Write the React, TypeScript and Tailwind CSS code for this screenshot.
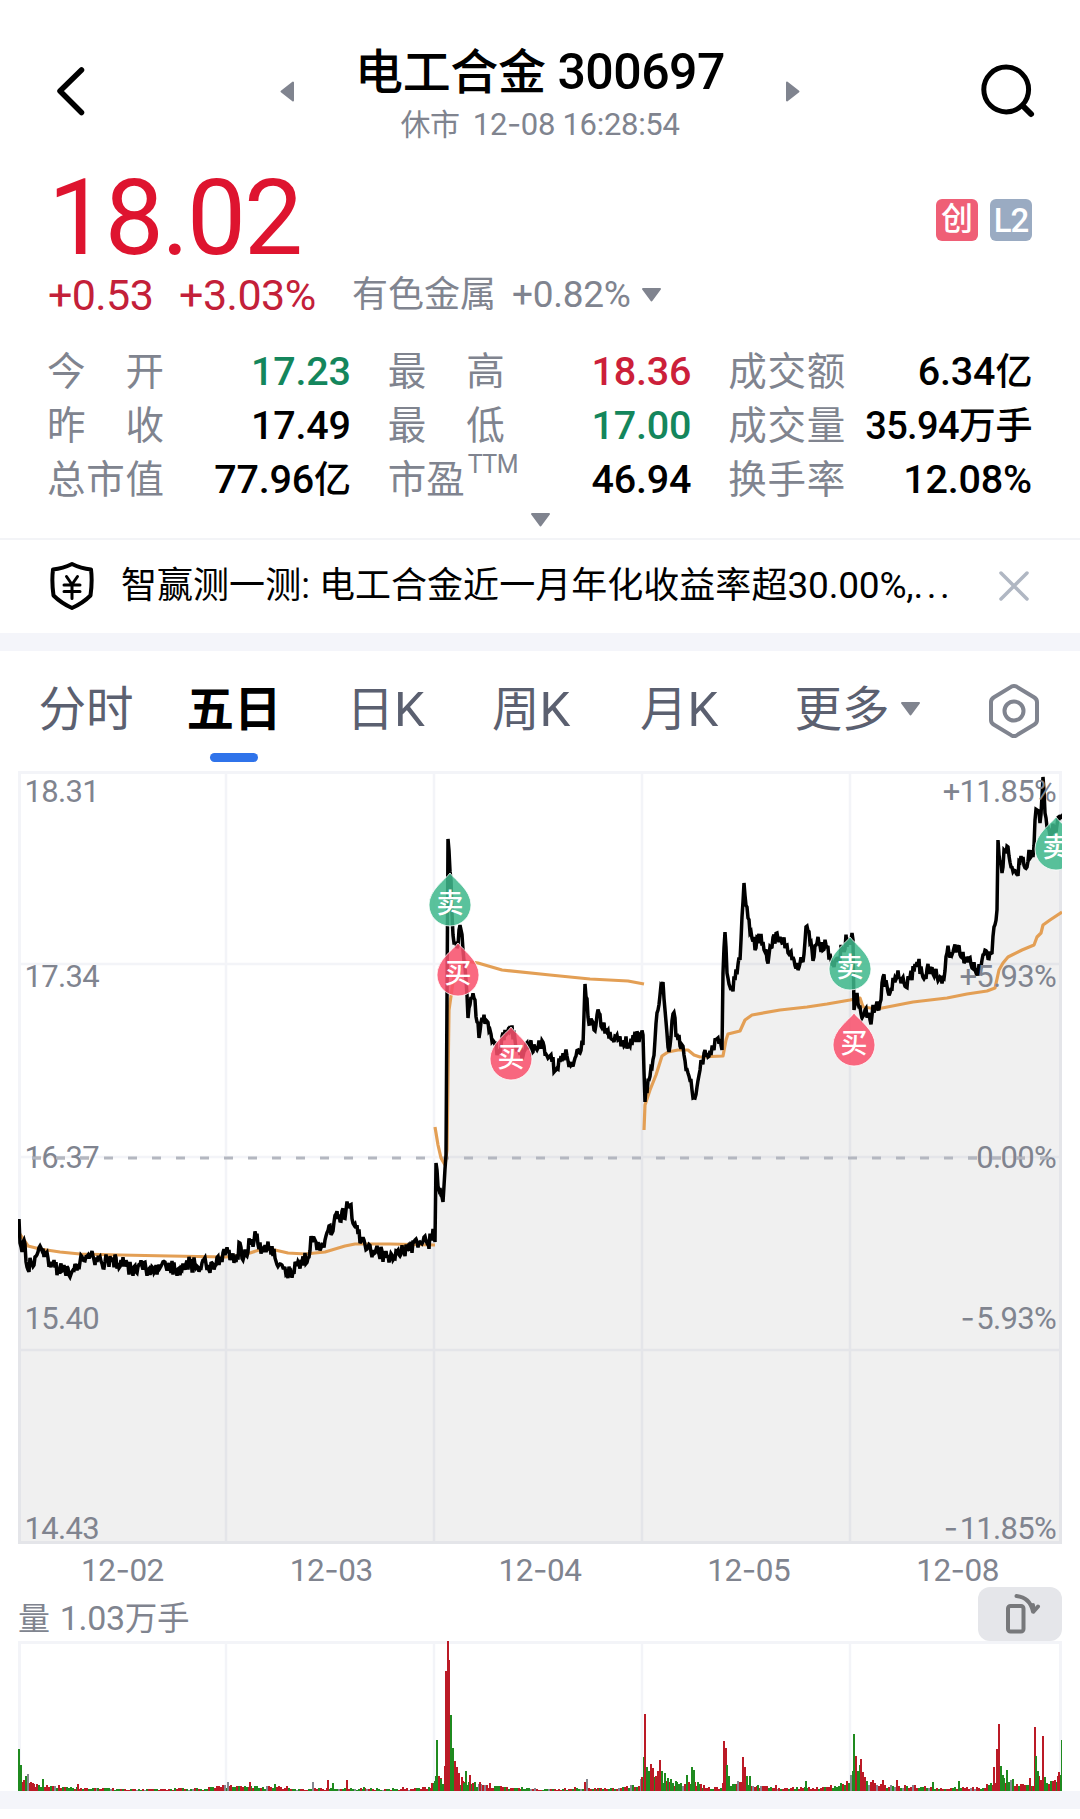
import React from 'react';

type Point = [number, number];

const stats = [
  [
    { label: '今开', value: '17.23', color: 'text-[#14865c]' },
    { label: '最高', value: '18.36', color: 'text-[#cc1f3a]' },
    { label: '成交额', value: '6.34亿', color: 'text-black' },
  ],
  [
    { label: '昨收', value: '17.49', color: 'text-black' },
    { label: '最低', value: '17.00', color: 'text-[#14865c]' },
    { label: '成交量', value: '35.94万手', color: 'text-black' },
  ],
  [
    { label: '总市值', value: '77.96亿', color: 'text-black' },
    { label: '市盈', value: '46.94', color: 'text-black', sup: 'TTM' },
    { label: '换手率', value: '12.08%', color: 'text-black' },
  ],
];

const tabs = ['分时', '五日', '日K', '周K', '月K'];

const dates = ['12-02', '12-03', '12-04', '12-05', '12-08'];

const dayLines = [226, 434, 642, 850];

const priceLabels = [
  { y: 802, left: '18.31', right: '+11.85%' },
  { y: 987, left: '17.34', right: '+5.93%' },
  { y: 1168, left: '16.37', right: '0.00%' },
  { y: 1329, left: '15.40', right: '-5.93%' },
  { y: 1539, left: '14.43', right: '-11.85%' },
];

const price: Point[] = [
  [19, 1219], [20, 1243], [22, 1252], [24, 1240], [27, 1267], [31, 1262], [34, 1265], [38, 1252], [41, 1248],
  [44, 1257], [48, 1258], [53, 1265], [58, 1269], [65, 1271], [70, 1277], [73, 1270], [78, 1264], [83, 1260],
  [88, 1255], [92, 1251], [97, 1262], [105, 1262], [112, 1260], [118, 1263], [125, 1265], [132, 1269], [137, 1273],
  [142, 1266], [148, 1270], [155, 1271], [160, 1268], [165, 1262], [170, 1268], [178, 1269], [184, 1267],
  [190, 1263], [197, 1266], [202, 1263], [208, 1265], [215, 1266], [220, 1259], [225, 1255], [229, 1250],
  [231, 1256], [236, 1262], [240, 1243], [243, 1260], [246, 1255], [250, 1243], [256, 1236], [259, 1249],
  [264, 1252], [270, 1247], [275, 1258], [280, 1264], [286, 1275], [291, 1272], [297, 1266], [302, 1262],
  [308, 1258], [311, 1236], [315, 1240], [321, 1248], [325, 1240], [329, 1226], [333, 1231], [336, 1214],
  [340, 1221], [346, 1210], [350, 1205], [354, 1225], [358, 1234], [364, 1240], [367, 1249], [373, 1250],
  [378, 1251], [385, 1257], [392, 1255], [398, 1250], [404, 1251], [410, 1249], [415, 1240], [420, 1242],
  [427, 1243], [432, 1239], [433, 1229], [435, 1242], [436, 1163], [439, 1190], [443, 1202], [446, 1155],
  [447, 1000], [448, 839], [451, 880], [453, 935], [455, 943], [457, 948], [460, 925], [463, 950], [466, 980],
  [468, 1018], [471, 997], [474, 998], [477, 1022], [479, 1038], [482, 1018], [486, 1020], [490, 1030],
  [495, 1045], [500, 1052], [505, 1030], [510, 1026], [515, 1040], [520, 1055], [525, 1050], [530, 1043],
  [533, 1052], [538, 1048], [544, 1046], [550, 1056], [556, 1070], [560, 1062], [565, 1055], [570, 1062],
  [575, 1058], [578, 1050], [583, 1045], [585, 984], [588, 1017], [594, 1030], [599, 1013], [603, 1026],
  [608, 1030], [613, 1040], [617, 1035], [622, 1042], [628, 1043], [634, 1038], [640, 1035], [643, 1035],
  [645, 1102], [648, 1080], [652, 1068], [655, 1040], [658, 1010], [661, 985], [663, 982], [665, 1010],
  [669, 1052], [673, 1014], [678, 1040], [684, 1055], [688, 1073], [692, 1090], [695, 1098], [700, 1070],
  [704, 1053], [708, 1057], [713, 1047], [718, 1038], [722, 1050], [723, 973], [725, 932], [727, 973], [731, 990],
  [735, 980], [740, 960], [744, 883], [747, 907], [750, 933], [754, 937], [755, 950], [757, 937], [763, 942],
  [767, 960], [772, 947], [777, 933], [782, 943], [787, 945], [792, 960], [797, 963], [803, 962], [806, 927],
  [810, 943], [814, 957], [817, 943], [827, 947], [831, 960], [837, 960], [843, 947], [848, 938], [853, 940],
  [854, 1010], [857, 993], [862, 1018], [865, 1010], [870, 1020], [875, 1007], [880, 1003], [883, 977], [890, 993],
  [893, 978], [900, 977], [906, 987], [910, 977], [917, 962], [925, 977], [930, 967], [935, 972], [943, 978],
  [947, 953], [953, 952], [958, 947], [961, 957], [967, 958], [977, 971], [982, 960], [987, 952], [992, 953],
  [994, 927], [997, 910], [998, 840], [1002, 873], [1004, 850], [1008, 847], [1011, 867], [1017, 872],
  [1023, 857], [1027, 867], [1029, 850], [1033, 857], [1035, 820], [1037, 810], [1040, 823], [1043, 777],
  [1045, 813], [1048, 827], [1052, 832], [1057, 825], [1060, 818], [1062, 819],
];

const average: Point[][] = [
  [
    [19, 1233], [24, 1240], [28, 1246], [40, 1249], [60, 1252], [80, 1254], [120, 1255], [170, 1256], [226, 1257],
    [235, 1256], [250, 1253], [262, 1249], [275, 1250], [288, 1253], [305, 1254], [325, 1252], [345, 1246],
    [355, 1244], [390, 1244], [435, 1245],
  ],
  [
    [435, 1127], [438, 1145], [441, 1158], [445, 1165], [447, 1150], [449, 1010], [454, 975], [465, 961],
    [478, 963], [502, 970], [550, 975], [590, 979], [628, 981], [644, 984],
  ],
  [
    [644, 1130], [645, 1105], [650, 1090], [656, 1075], [662, 1056], [668, 1052], [678, 1050], [688, 1050],
    [694, 1055], [700, 1057], [723, 1056], [726, 1040], [728, 1034], [740, 1031], [745, 1020], [752, 1015],
    [780, 1010], [807, 1007], [827, 1004], [850, 1000], [860, 998], [863, 1007], [877, 1009], [913, 1002],
    [947, 998], [967, 994], [987, 991], [995, 988], [999, 970], [1003, 963], [1008, 957], [1022, 950],
    [1034, 945], [1037, 937], [1041, 933], [1043, 925], [1050, 920], [1062, 912],
  ],
];

const markers = [
  { x: 450, y: 873, side: 'sell' },
  { x: 458, y: 943, side: 'buy' },
  { x: 511, y: 1027, side: 'buy' },
  { x: 850, y: 937, side: 'sell' },
  { x: 854, y: 1013, side: 'buy' },
  { x: 1056, y: 817, side: 'sell' },
];

const RED = '#bb1a26';
const GREEN = '#1f8a1f';
const GRAY = '#85878f';

// x, height, colour of the taller volume bars
const spikes: [number, number, string][] = [
  [18, 42, GREEN], [20, 26, GREEN], [23, 11, RED], [25, 15, GREEN], [27, 17, GRAY], [30, 9, RED], [33, 7, RED],
  [36, 7, RED], [42, 12, GREEN], [50, 5, GREEN], [58, 6, RED], [70, 4, GREEN], [77, 7, RED], [97, 3, GREEN],
  [218, 5, RED], [222, 6, RED], [227, 9, GRAY], [230, 6, RED], [240, 5, RED], [249, 9, RED], [256, 5, GREEN],
  [274, 7, GREEN], [286, 5, RED], [312, 9, GRAY], [327, 11, RED], [332, 8, GREEN], [346, 11, RED],
  [363, 4, GREEN], [402, 4, RED], [431, 8, RED], [435, 15, GREEN], [436, 51, GREEN], [438, 15, RED],
  [440, 12, GREEN], [444, 25, RED], [445, 120, RED], [447, 150, RED], [448, 131, RED], [450, 76, GREEN],
  [452, 43, GREEN], [454, 30, RED], [456, 24, RED], [458, 18, RED], [461, 14, RED], [463, 8, GREEN],
  [465, 20, GREEN], [469, 16, RED], [474, 9, GREEN], [479, 9, RED], [489, 8, RED], [496, 5, GREEN],
  [502, 4, RED], [521, 4, GREEN], [574, 4, RED], [584, 9, RED], [586, 12, GRAY], [597, 3, RED], [630, 6, GRAY],
  [641, 14, RED], [643, 34, GREEN], [644, 77, RED], [646, 24, GREEN], [648, 20, GREEN], [650, 27, RED],
  [652, 23, RED], [655, 15, RED], [657, 20, RED], [659, 31, RED], [661, 20, GREEN], [664, 18, GREEN],
  [667, 13, GREEN], [670, 12, GREEN], [675, 10, GREEN], [686, 16, GREEN], [691, 24, GREEN], [693, 21, GREEN],
  [697, 9, GREEN], [703, 6, RED], [723, 50, RED], [725, 43, RED], [726, 26, GREEN], [728, 15, GREEN],
  [737, 10, GRAY], [740, 9, RED], [742, 34, RED], [744, 24, RED], [746, 15, GREEN], [749, 15, GREEN],
  [757, 6, GREEN], [775, 6, RED], [805, 10, GREEN], [830, 6, RED], [846, 10, RED], [850, 16, GRAY],
  [852, 20, GREEN], [853, 57, GREEN], [855, 35, RED], [857, 20, GREEN], [859, 26, GREEN], [860, 32, RED],
  [862, 19, RED], [864, 14, RED], [866, 10, GREEN], [872, 11, RED], [882, 11, RED], [896, 11, RED],
  [914, 6, RED], [932, 9, GREEN], [958, 10, GREEN], [986, 7, RED], [993, 24, RED], [996, 42, RED],
  [998, 67, RED], [1000, 25, GREEN], [1003, 13, GREEN], [1006, 21, GREEN], [1012, 12, GREEN], [1020, 7, RED],
  [1029, 13, RED], [1034, 64, RED], [1035, 35, GREEN], [1037, 20, GREEN], [1042, 55, RED], [1044, 14, GREEN],
  [1050, 10, GREEN], [1054, 11, RED], [1057, 15, RED], [1058, 19, RED], [1061, 51, GREEN],
];

// background level of the volume across the five days
const volumeBase: Point[] = [
  [18, 14], [26, 9], [40, 6], [60, 4.5], [85, 3], [120, 2], [200, 2.5], [220, 5], [245, 5], [280, 4], [300, 2],
  [340, 3], [400, 2], [430, 4], [436, 13], [443, 10], [446, 40], [452, 25], [460, 11], [475, 7], [500, 4],
  [540, 2], [620, 3], [638, 7], [645, 20], [660, 14], [675, 8], [695, 8], [705, 4], [720, 3.5], [723, 20],
  [729, 7], [742, 9], [755, 5], [780, 3], [820, 4], [850, 9], [856, 22], [865, 10], [885, 5], [910, 5],
  [940, 2.5], [985, 4], [994, 10], [1001, 15], [1014, 7], [1030, 6], [1036, 15], [1047, 9], [1060, 14],
];

const noise = (i: number) => {
  const v = Math.sin(i * 127.1 + 11.7) * 43758.5453;
  return v - Math.floor(v);
};

const lerp = (points: Point[], x: number) => {
  const next = points.findIndex((p) => p[0] >= x);
  if (next <= 0) return points[next < 0 ? points.length - 1 : 0][1];
  const [x0, y0] = points[next - 1];
  const [x1, y1] = points[next];
  return y0 + ((y1 - y0) * (x - x0)) / (x1 - x0);
};

const jitter = (points: Point[]) => {
  const out: Point[] = [];
  points.forEach(([x, y], i) => {
    out.push([x, y]);
    const next = points[i + 1];
    if (!next) return;
    const steps = Math.floor(next[0] - x);
    for (let s = 1; s < steps; s++) {
      const px = x + s;
      out.push([px, y + ((next[1] - y) * s) / steps + (noise(px) - 0.5) * 15]);
    }
  });
  return out;
};

const toPath = (points: Point[]) => points.map(([x, y], i) => `${i ? 'L' : 'M'}${x} ${y.toFixed(1)}`).join('');

const pricePath = toPath(jitter(price));

const volumeBars = Array.from({ length: 522 }, (_, i) => {
  const x = 18 + i * 2;
  const n = noise(i + 900);
  const c = noise(i + 3000);
  return {
    x,
    h: Math.max(1, lerp(volumeBase, x) * (0.5 + n * 0.7)),
    color: c < 0.47 ? RED : c < 0.93 ? GREEN : GRAY,
  };
});

function Triangle({ className }: { className?: string }) {
  return (
    <svg viewBox="0 0 21 14" className={`shrink-0 ${className ?? ''}`}>
      <path d="M2 1H19L10.5 12.5Z" fill="#80848f" stroke="#80848f" strokeWidth="2" strokeLinejoin="round" />
    </svg>
  );
}

function SideTriangle({ flip }: { flip?: boolean }) {
  return (
    <svg viewBox="0 0 14 21" className={flip ? 'h-[21px] w-[14px] rotate-180' : 'h-[21px] w-[14px]'}>
      <path d="M13 1.5V19.5L1.5 10.5Z" fill="#80848f" stroke="#80848f" strokeWidth="2" strokeLinejoin="round" />
    </svg>
  );
}

// Roboto's hyphen is too short next to its digits, so it is set in Inter
function Dashed({ text }: { text: string }) {
  const [head, tail] = text.split('-');
  return (
    <>
      {head}
      <span className="font-[Inter] tracking-[-0.5px]">-</span>
      {tail}
    </>
  );
}

function Header() {
  return (
    <div className="mt-[41px] flex h-[100px] items-center justify-between px-[44px]">
      <svg viewBox="0 0 56 56" className="h-14 w-14" fill="none" stroke="#000" strokeWidth="5.5" strokeLinecap="round" strokeLinejoin="round">
        <path d="M37.5 7L16 28L37.5 49.500" />
      </svg>
      <div className="flex items-center">
        <SideTriangle />
        <div className="mt-1 w-[492px] text-center">
          <div className="h-[60px] text-[50px] leading-[60px] font-medium tracking-[-0.5px] whitespace-pre text-black">
            <span className="text-[48px] tracking-[-0.4px]">电工合金</span> 300697
          </div>
          <div className="mt-[2px] h-[40px] text-[31px] leading-[40px] tracking-[-0.3px] text-[#80848f]">
            <span className="mr-[13px] text-[30px]">休市</span>
            <Dashed text="12-08 16:28:54" />
          </div>
        </div>
        <SideTriangle flip />
      </div>
      <svg viewBox="0 0 56 56" className="h-14 w-14" fill="none" stroke="#000" strokeWidth="5" strokeLinecap="round">
        <circle cx="26.200" cy="26.500" r="22.400" />
        <path d="M43 43L51 51" strokeWidth="6" />
      </svg>
    </div>
  );
}

function StatCell({ item }: { item: { label: string; value: string; color: string; sup?: string } }) {
  return (
    <div className="flex h-[54px] items-center justify-between">
      <div className="relative -ml-px flex w-[117px] justify-between text-[38.500px] leading-[54px] text-[#80848f]">
        {item.sup ? <span>{item.label}</span> : item.label.split('').map((ch, i) => <span key={i}>{ch}</span>)}
        {item.sup && (
          <span className="absolute -top-px left-[80px] text-[25px] leading-[26px] tracking-[-0.5px]">{item.sup}</span>
        )}
      </div>
      <div className={`text-[39.500px] leading-[54px] font-medium tracking-[-0.2px] whitespace-nowrap ${item.color}`}>
        {item.value.split(/([亿万手]+)/).map((part, i) => (
          <span key={i} className={i % 2 ? 'text-[37px] tracking-[-0.4px]' : item.value.includes('万') ? 'text-[38px] tracking-[-0.7px]' : ''}>
            {part}
          </span>
        ))}
      </div>
    </div>
  );
}

function Quote() {
  return (
    <div className="mt-[23px] px-12">
      <div className="flex h-[110px] items-center justify-between">
        <div className="text-[105px] leading-[110px] tracking-[-2.2px] text-[#de142f]">18.02</div>
        <div className="mt-[2px] flex gap-3 font-medium text-white">
          <div className="flex h-[42px] w-[42px] items-center justify-center rounded-md bg-[#ef5f76] pb-[3px] text-[32px] leading-none">创</div>
          <div className="flex h-[42px] w-[42px] items-center justify-center rounded-md bg-[#9aabc2] text-[33px] leading-none tracking-[-1px]">L2</div>
        </div>
      </div>
      <div className="-mt-[3px] flex h-12 items-center leading-[48px]">
        <div className="w-[131px] text-[43px] tracking-[-0.6px] text-[#c32039]">+0.53</div>
        <div className="w-[173px] text-[43px] tracking-[-0.5px] text-[#c32039]">+3.03%</div>
        <div className="text-[37px] tracking-[-0.3px] whitespace-pre text-[#80848f]">
          <span className="mr-[16px] text-[36px] tracking-normal">有色金属</span>+0.82%
        </div>
        <Triangle className="ml-[11px] h-[14px] w-[21px]" />
      </div>
      <div className="mt-[26px] grid grid-cols-3 gap-x-[38px]">
        {stats.flat().map((item) => (
          <StatCell key={item.label} item={item} />
        ))}
      </div>
      <div className="flex justify-center pt-[6px] pb-[11px]">
        <Triangle className="h-[14px] w-[21px]" />
      </div>
    </div>
  );
}

function Notice() {
  return (
    <div className="flex h-[95px] items-center border-t-2 border-[#f3f4f7] pr-[51px] pb-[1px] pl-[50px]">
      <svg viewBox="0 0 44 50" className="h-[50px] w-[44px]" fill="none" stroke="#000" strokeLinecap="round" strokeLinejoin="round">
        <path d="M22 3Q31 7.500 41 8.500Q42.500 20 40.500 34.500Q33 42 22 47Q11 42 3.500 34.500Q1.500 20 3 8.500Q13 7.500 22 3Z" strokeWidth="4" />
        <path d="M16.500 15.500L22 23.500L27.500 15.500M14 24H30M14 30.500H30M22 24V37.500" strokeWidth="3" />
      </svg>
      <div className="ml-[27px] flex-1 text-[37px] leading-[60px] tracking-[-0.2px] whitespace-pre text-black">
        <span className="text-[36px] tracking-[0.04px]">智赢测一测: 电工合金近一月年化收益率超</span>30.00%,
        <span className="tracking-[3.600px]">...</span>
      </div>
      <svg viewBox="0 0 30 30" className="h-[30px] w-[30px]" stroke="#b0b7c3" strokeWidth="3.500" strokeLinecap="round">
        <path d="M2 2L28 28M28 2L2 28" />
      </svg>
    </div>
  );
}

function Tabs() {
  return (
    <div className="grid h-[120px] grid-cols-[146px_148px_157px_134px_162px_196px_114px] pl-[14px] text-[49px] text-[#5b6070]">
      {tabs.map((tab) => {
        const active = tab === '五日';
        return (
          <div key={tab} className={active ? 'flex flex-col items-center font-bold text-black' : 'flex flex-col items-center'}>
            <div className={active ? 'mt-[29px] h-[60px] leading-[60px]' : 'mt-[29px] -ml-[2px] h-[60px] leading-[60px]'}>
              <span className="text-[47.500px]">{tab.replace('K', '')}</span>
              {tab.endsWith('K') && 'K'}
            </div>
            {active && <div className="mt-[13px] h-[9px] w-[48px] rounded-full bg-[#2f73ea]" />}
          </div>
        );
      })}
      <div className="mt-[28px] flex h-[60px] items-center justify-center leading-[60px]">
        <span className="mt-[2px] -ml-[3px] text-[47.500px]">更多</span>
        <Triangle className="ml-[10px] h-[14px] w-[21px]" />
      </div>
      <div className="mt-[32px] flex h-[56px] items-center justify-center">
        <svg viewBox="0 0 52 56" className="h-[56px] w-[52px]" fill="none" stroke="#80848f" strokeWidth="4" strokeLinejoin="round">
          <path d="M23.500 3.600Q26 2.200 28.500 3.600L46 14.200Q49 16 49 19V37Q49 40 46 41.800L28.500 52.400Q26 53.800 23.500 52.400L6 41.800Q3 40 3 37V19Q3 16 6 14.200Z" />
          <circle cx="26" cy="28" r="9.500" />
        </svg>
      </div>
    </div>
  );
}

function PriceChart() {
  return (
    <svg viewBox="0 771 1080 773" className="block h-[773px] w-[1080px] overflow-visible">
      <defs>
        <clipPath id="plot">
          <rect x="18" y="771" width="1044" height="773" />
        </clipPath>
      </defs>
      <g stroke="#f3f4f8" strokeWidth="2.500" fill="none">
        <rect x="19.500" y="772.500" width="1041" height="770" strokeWidth="3" />
        {dayLines.map((x) => (
          <path key={x} d={`M${x} 774V1542`} />
        ))}
        <path d="M20 964H1061M20 1157H1061M20 1350H1061" />
      </g>
      <g clipPath="url(#plot)">
        <path d={`${pricePath}V1544H18V1219Z`} fill="#000" fillOpacity="0.06" />
        <path d="M32 1158H1056" stroke="#b4b7c0" strokeWidth="3" strokeDasharray="9 15" />
        {average.map((line, i) => (
          <path key={i} d={toPath(line)} fill="none" stroke="#e39f55" strokeWidth="3.200" strokeLinejoin="round" />
        ))}
        <path d={pricePath} fill="none" stroke="#000" strokeWidth="3.500" strokeLinejoin="miter" strokeMiterlimit="3" />
        {markers.map(({ x, y, side }) => (
          <g key={`${x}-${y}`}>
            <path
              d={`M${x} ${y}C${x + 5} ${y + 7} ${x + 21} ${y + 17} ${x + 21} ${y + 32}A21 21 0 0 1 ${x - 21} ${y + 32}C${x - 21} ${y + 17} ${x - 5} ${y + 7} ${x} ${y}Z`}
              fill={side === 'sell' ? '#3fb88c' : '#f9506c'}
              fillOpacity="0.86"
              stroke="#fff"
              strokeOpacity="0.8"
              strokeWidth="1"
            />
            <text x={x} y={y + 39.500} textAnchor="middle" fontSize="27" fontWeight="500" fill="#fff">
              {side === 'sell' ? '卖' : '买'}
            </text>
          </g>
        ))}
      </g>
      <g fontSize="31" fill="#80848f" letterSpacing="-0.7">
        {priceLabels.map((row) => (
          <React.Fragment key={row.y}>
            <text x="24.500" y={row.y}>{row.left}</text>
            <text x="1056" y={row.y} textAnchor="end">
              {row.right.startsWith('-') && <tspan className="font-[Inter]" letterSpacing="1.5">-</tspan>}
              {row.right.replace('-', '')}
            </text>
          </React.Fragment>
        ))}
      </g>
      <path d="M32 1158H97M968 1158H1056" stroke="#b4b7c0" strokeWidth="3" strokeDasharray="9 15" />
    </svg>
  );
}

function VolumeChart() {
  return (
    <svg viewBox="0 1641 1080 150" className="block h-[150px] w-[1080px]">
      <g stroke="#f3f4f8" fill="none">
        <path d="M19.500 1791V1642.500H1060.500V1791" strokeWidth="3" />
        {dayLines.map((x) => (
          <path key={x} d={`M${x} 1643V1791`} strokeWidth="2.500" />
        ))}
      </g>
      <g shapeRendering="crispEdges">
        {volumeBars.map((bar) => (
          <rect key={bar.x} x={bar.x} y={1791 - bar.h} width="2" height={bar.h} fill={bar.color} />
        ))}
        {spikes.map(([x, h, color], i) => (
          <rect key={i} x={x} y={1791 - h} width={x > 1060 ? 1 : 2} height={h} fill={color} />
        ))}
      </g>
    </svg>
  );
}

export default function App() {
  return (
    <div className="flex h-[1819px] w-[1080px] flex-col overflow-hidden bg-white font-[Roboto,'Noto_Sans_CJK_SC',sans-serif]">
      <Header />
      <Quote />
      <Notice />
      <div className="h-[18px] bg-[#f4f5fa]" />
      <Tabs />
      <PriceChart />
      <div className="-mb-[9px] grid h-[52px] grid-cols-5 px-[18px] text-center text-[31.500px] leading-[52px] tracking-[-0.5px] text-[#80848f]">
        {dates.map((date) => (
          <div key={date}>
            <Dashed text={date} />
          </div>
        ))}
      </div>
      <div className="flex h-[54px] items-center justify-between px-[18px]">
        <div className="mt-[8px] text-[34px] leading-[46px] tracking-[-0.3px] whitespace-pre text-[#80848f]">
          <span className="mr-[10px] text-[32px]">量</span>1.03<span className="text-[32.500px]">万手</span>
        </div>
        <div className="flex h-[54px] w-[84px] items-center justify-center rounded-xl bg-[#e5e6ea]">
          <svg viewBox="0 0 84 54" className="h-[54px] w-[84px]" fill="none" stroke="#77787b" strokeWidth="4" strokeLinecap="round" strokeLinejoin="round">
            <rect x="30" y="19" width="15.500" height="25.500" rx="2.500" />
            <path d="M38.500 9Q52 10.500 55 24.500M55 18L55.200 24.800L60 19.500" />
          </svg>
        </div>
      </div>
      <VolumeChart />
      <div className="h-[18px] bg-[#f4f5fa]" />
    </div>
  );
}
